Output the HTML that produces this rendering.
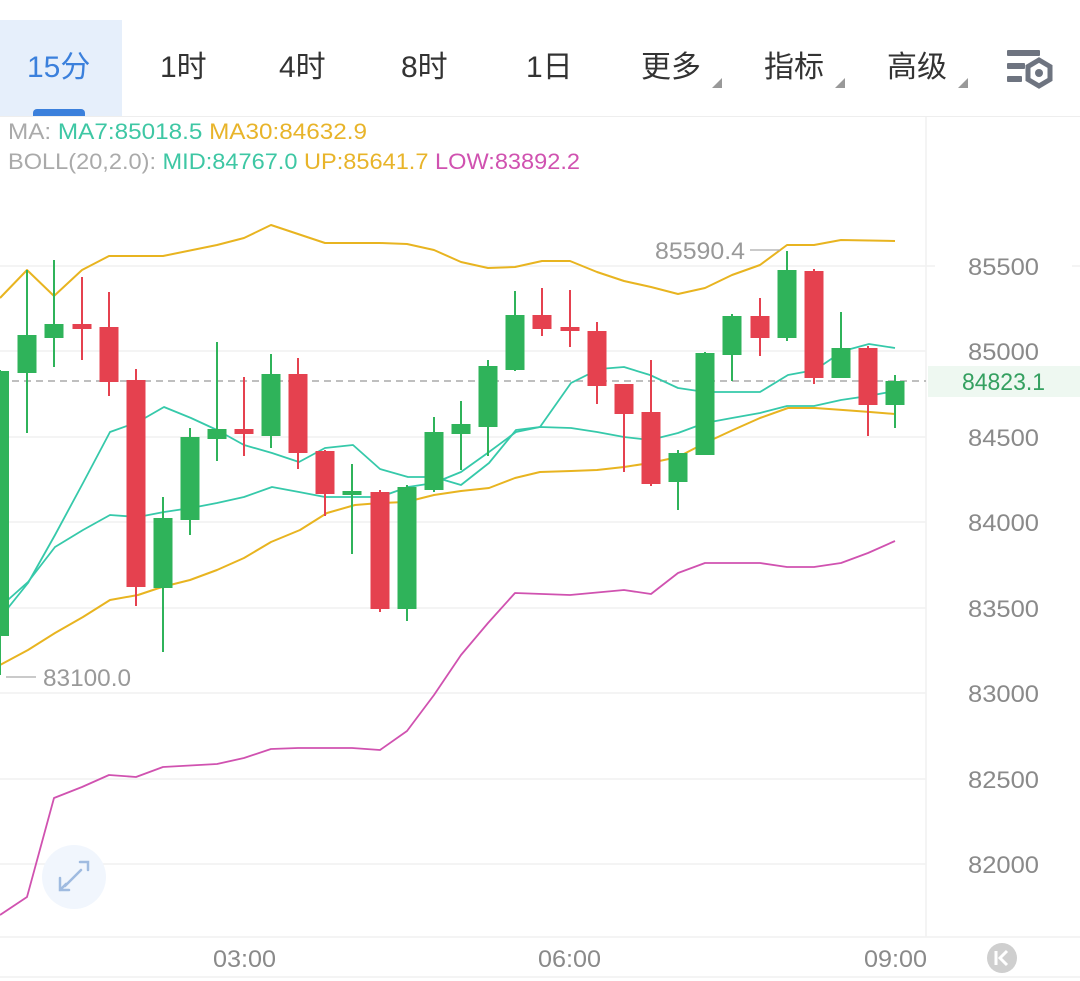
<!DOCTYPE html>
<html><head><meta charset="utf-8"><style>
html,body{margin:0;padding:0;background:#fff;width:1080px;height:981px;overflow:hidden;font-family:"Liberation Sans","Noto Sans CJK SC",sans-serif}
.t{position:absolute;top:48px;font-size:30px;color:#333;line-height:40px}
</style></head><body>
<div style="position:absolute;left:0;top:20px;width:122px;height:96px;background:#e6effb"></div>
<div style="position:absolute;left:33px;top:109px;width:52px;height:8px;border-radius:4px 4px 0 0;background:#3b80dc"></div>
<div class="t" style="left:27px;color:#3b80dc">15分</div>
<div class="t" style="left:160px">1时</div>
<div class="t" style="left:279px">4时</div>
<div class="t" style="left:401px">8时</div>
<div class="t" style="left:526px">1日</div>
<div class="t" style="left:641px">更多</div>
<div class="t" style="left:764px">指标</div>
<div class="t" style="left:887px">高级</div>
<svg width="1080" height="981" style="position:absolute;left:0;top:0" xmlns="http://www.w3.org/2000/svg">
<g fill="#999"><path d="M712 88 L722 78 L722 88Z"/><path d="M835 88 L845 78 L845 88Z"/><path d="M958 88 L968 78 L968 88Z"/></g>
<g fill="#6e7480"><rect x="1007" y="50" width="33" height="6" rx="1"/><rect x="1007" y="63" width="18" height="6" rx="1"/><rect x="1007" y="76" width="15" height="6" rx="1"/></g>
<polygon points="1039,60 1050,66.5 1050,79.5 1039,86 1028,79.5 1028,66.5" fill="none" stroke="#6e7480" stroke-width="5"/>
<circle cx="1039" cy="73" r="4" fill="#6e7480"/>
<line x1="0" y1="116.5" x2="1080" y2="116.5" stroke="#eee"/>
<text x="8" y="139" font-size="22" fill="#aaa" textLength="359" lengthAdjust="spacingAndGlyphs">MA: <tspan fill="#3ec7a4">MA7:85018.5</tspan> <tspan fill="#e8b42a">MA30:84632.9</tspan></text>
<text x="8" y="169" font-size="22" fill="#aaa" textLength="572" lengthAdjust="spacingAndGlyphs">BOLL(20,2.0): <tspan fill="#3ec7a4">MID:84767.0</tspan> <tspan fill="#e8b42a">UP:85641.7</tspan> <tspan fill="#d052b0">LOW:83892.2</tspan></text>
<g stroke="#f1f1f1" stroke-width="1.5">
<line x1="0" y1="266" x2="926" y2="266"/><line x1="0" y1="351" x2="926" y2="351"/><line x1="0" y1="437" x2="926" y2="437"/><line x1="0" y1="522" x2="926" y2="522"/><line x1="0" y1="608" x2="926" y2="608"/><line x1="0" y1="693" x2="926" y2="693"/><line x1="0" y1="779" x2="926" y2="779"/><line x1="0" y1="864" x2="926" y2="864"/>
<line x1="926" y1="117" x2="926" y2="937"/><line x1="0" y1="937" x2="1080" y2="937"/><line x1="0" y1="977" x2="1080" y2="977"/>
<line x1="926" y1="266" x2="935" y2="266"/><line x1="1072" y1="266" x2="1080" y2="266"/>
</g>
<rect x="928" y="366" width="152" height="31" fill="#eef8f1"/>
<g font-size="24" fill="#8a8a8a">
<text x="968" y="275" textLength="71" lengthAdjust="spacingAndGlyphs">85500</text><text x="968" y="360" textLength="71" lengthAdjust="spacingAndGlyphs">85000</text><text x="968" y="446" textLength="71" lengthAdjust="spacingAndGlyphs">84500</text><text x="968" y="531" textLength="71" lengthAdjust="spacingAndGlyphs">84000</text><text x="968" y="617" textLength="71" lengthAdjust="spacingAndGlyphs">83500</text><text x="968" y="702" textLength="71" lengthAdjust="spacingAndGlyphs">83000</text><text x="968" y="788" textLength="71" lengthAdjust="spacingAndGlyphs">82500</text><text x="968" y="873" textLength="71" lengthAdjust="spacingAndGlyphs">82000</text>
<text x="213" y="967" textLength="63" lengthAdjust="spacingAndGlyphs">03:00</text><text x="538" y="967" textLength="63" lengthAdjust="spacingAndGlyphs">06:00</text><text x="864" y="967" textLength="63" lengthAdjust="spacingAndGlyphs">09:00</text>
</g>
<text x="962" y="390" font-size="24" fill="#34a060" textLength="83" lengthAdjust="spacingAndGlyphs">84823.1</text>
<line x1="0" y1="381" x2="926" y2="381" stroke="#aaa" stroke-width="1.5" stroke-dasharray="7,5"/>
<g fill="none" stroke-width="2" stroke-linejoin="round">
<polyline stroke="#e8b420" points="0,298 27,270 54,296 82,270 109,256 163,256 217,245 244,238 271,225 325,243 380,243 407,244 434,250 461,262 488,268 515,267 542,261 570,261 597,272 624,281 651,287 678,294 705,288 732,275 760,265 787,245 814,245 841,240 895,241"/>
<polyline stroke="#e8b420" points="0,665 28,650 55,633 83,617 110,600 138,595 162,587 190,580 217,570 244,558 271,542 300,530 327,513 355,505 380,503 406,502 434,495 461,491 489,488 515,478 540,472 571,471 597,470 624,467 650,463 678,457 705,443 733,430 760,418 788,408 815,408 843,410 870,412 895,414"/>
<polyline stroke="#36c9aa" stroke-width="1.8" points="0,618 28,583 55,535 83,483 110,432 138,422 164,407 191,418 217,430 244,445 272,453 299,462 325,448 353,445 380,469 408,477 434,477 461,485 489,463 516,430 540,427 571,383 599,369 624,367 650,375 678,388 705,392 733,392 760,392 788,375 815,370 843,351 869,344 895,348"/>
<polyline stroke="#36c9aa" stroke-width="1.8" points="0,607 28,582 55,547 83,530 110,515 138,517 164,512 191,508 217,503 244,497 272,487 299,492 325,497 353,497 380,497 408,487 434,483 461,472 489,452 516,432 540,427 571,428 597,432 624,437 650,440 678,433 705,423 732,418 760,413 787,406 814,406 841,400 868,396 895,391"/>
<polyline stroke="#d052b0" stroke-width="1.8" points="0,915 27,897 54,798 82,787 109,775 136,777 163,767 217,764 244,758 271,749 298,748 352,748 380,750 407,731 434,695 461,655 488,623 515,593 570,595 624,590 651,594 678,573 705,563 760,563 787,567 814,567 841,563 868,553 895,541"/>
</g>
<g stroke-width="2">
<g stroke="#2fb35a" fill="#2fb35a">
<line x1="0" y1="370" x2="0" y2="675"/><rect x="-9" y="372" width="17" height="263"/>
<line x1="27" y1="270" x2="27" y2="433"/><rect x="18.5" y="336" width="17" height="36"/>
<line x1="54" y1="260" x2="54" y2="367"/><rect x="45.5" y="325" width="17" height="12"/>
<line x1="163" y1="497" x2="163" y2="652"/><rect x="154.5" y="519" width="17" height="68"/>
<line x1="190" y1="428" x2="190" y2="535"/><rect x="181.5" y="438" width="17" height="81"/>
<line x1="217" y1="342" x2="217" y2="461"/><rect x="208.5" y="430" width="17" height="8"/>
<line x1="271" y1="354" x2="271" y2="448"/><rect x="262.5" y="375" width="17" height="60"/>
<line x1="352" y1="464" x2="352" y2="554"/><rect x="343.5" y="492" width="17" height="2"/>
<line x1="407" y1="485" x2="407" y2="621"/><rect x="398.5" y="488" width="17" height="120"/>
<line x1="434" y1="417" x2="434" y2="492"/><rect x="425.5" y="433" width="17" height="56"/>
<line x1="461" y1="401" x2="461" y2="470"/><rect x="452.5" y="425" width="17" height="8"/>
<line x1="488" y1="360" x2="488" y2="456"/><rect x="479.5" y="367" width="17" height="59"/>
<line x1="515" y1="291" x2="515" y2="371"/><rect x="506.5" y="316" width="17" height="53"/>
<line x1="678" y1="450" x2="678" y2="510"/><rect x="669.5" y="454" width="17" height="27"/>
<line x1="705" y1="352" x2="705" y2="455"/><rect x="696.5" y="354" width="17" height="100"/>
<line x1="732" y1="314" x2="732" y2="381"/><rect x="723.5" y="317" width="17" height="37"/>
<line x1="787" y1="251" x2="787" y2="341"/><rect x="778.5" y="271" width="17" height="66"/>
<line x1="841" y1="312" x2="841" y2="377"/><rect x="832.5" y="349" width="17" height="28"/>
<line x1="895" y1="375" x2="895" y2="428"/><rect x="886.5" y="382" width="17" height="22"/>
</g>
<g stroke="#e5414f" fill="#e5414f">
<line x1="82" y1="277" x2="82" y2="360"/><rect x="73.5" y="325" width="17" height="3"/>
<line x1="109" y1="292" x2="109" y2="396"/><rect x="100.5" y="328" width="17" height="53"/>
<line x1="136" y1="369" x2="136" y2="606"/><rect x="127.5" y="381" width="17" height="205"/>
<line x1="244" y1="377" x2="244" y2="456"/><rect x="235.5" y="430" width="17" height="3"/>
<line x1="298" y1="358" x2="298" y2="469"/><rect x="289.5" y="375" width="17" height="77"/>
<line x1="325" y1="450" x2="325" y2="516"/><rect x="316.5" y="452" width="17" height="41"/>
<line x1="380" y1="490" x2="380" y2="612"/><rect x="371.5" y="493" width="17" height="115"/>
<line x1="542" y1="288" x2="542" y2="336"/><rect x="533.5" y="316" width="17" height="12"/>
<line x1="570" y1="290" x2="570" y2="347"/><rect x="561.5" y="328" width="17" height="2"/>
<line x1="597" y1="322" x2="597" y2="404"/><rect x="588.5" y="332" width="17" height="53"/>
<line x1="624" y1="385" x2="624" y2="472"/><rect x="615.5" y="385" width="17" height="28"/>
<line x1="651" y1="360" x2="651" y2="486"/><rect x="642.5" y="413" width="17" height="70"/>
<line x1="760" y1="298" x2="760" y2="356"/><rect x="751.5" y="317" width="17" height="20"/>
<line x1="814" y1="269" x2="814" y2="384"/><rect x="805.5" y="272" width="17" height="105"/>
<line x1="868" y1="346" x2="868" y2="436"/><rect x="859.5" y="349" width="17" height="55"/>
</g>
</g>
<line x1="750" y1="250" x2="780" y2="250" stroke="#aaa" stroke-width="1.2"/>
<text x="655" y="259" font-size="24" fill="#999" textLength="90" lengthAdjust="spacingAndGlyphs">85590.4</text>
<line x1="6" y1="677" x2="36" y2="677" stroke="#aaa" stroke-width="1.2"/>
<text x="43" y="686" font-size="24" fill="#999" textLength="88" lengthAdjust="spacingAndGlyphs">83100.0</text>
<circle cx="74" cy="877" r="32" fill="#f1f6fd"/>
<g stroke="#9fbbe0" stroke-width="2.5" fill="none" stroke-linecap="round"><path d="M65 886 L81 870 M80 862 L88 862 L88 870 M60 878 L60 890 L69 890 M60 890 L66 884"/></g>
<circle cx="1002" cy="958" r="15" fill="#cfcfcf"/>
<path d="M996 951 V965 M1007 951 L1000 958 L1007 965" stroke="#fff" stroke-width="3" fill="none"/>
</svg>
</body></html>
